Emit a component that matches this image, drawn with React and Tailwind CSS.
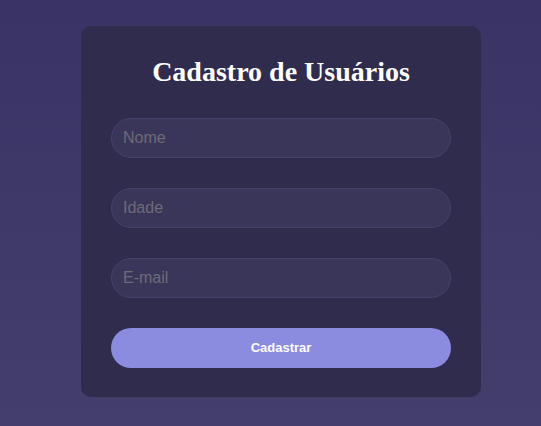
export default function App() {
  const fields = [
    { name: 'nome', type: 'text', placeholder: 'Nome' },
    { name: 'idade', type: 'number', placeholder: 'Idade' },
    { name: 'email', type: 'email', placeholder: 'E-mail' }
  ]

  return (
    <div className="min-h-[426px] w-full bg-gradient-to-b from-[#3a3466] to-[#433e6c] flex justify-center pl-[21px] pt-[26px] font-['Liberation_Sans',Arial,sans-serif]">
      <form
        className="w-[400px] h-[371px] bg-[#2f2c4d] rounded-[10px] px-[30px] pt-[30px] flex flex-col"
        onSubmit={(e) => e.preventDefault()}
      >
        <h1 className="text-center text-white font-bold text-[28px] leading-[32px] font-['Liberation_Serif','Times_New_Roman',serif] mb-[30px]">
          Cadastro de Usuários
        </h1>

        <div className="flex flex-col gap-[30px]">
          {fields.map((field) => (
            <input
              key={field.name}
              name={field.name}
              type={field.type}
              placeholder={field.placeholder}
              className="h-[40px] w-full rounded-full bg-[#39365a] border border-[#46426b] px-[11px] text-[16px] text-white placeholder:text-[#6f6b76] outline-none"
            />
          ))}

          <button
            type="submit"
            className="h-[40px] w-full rounded-full bg-[#8b8be0] text-white font-bold text-[13px]"
          >
            Cadastrar
          </button>
        </div>
      </form>
    </div>
  )
}
